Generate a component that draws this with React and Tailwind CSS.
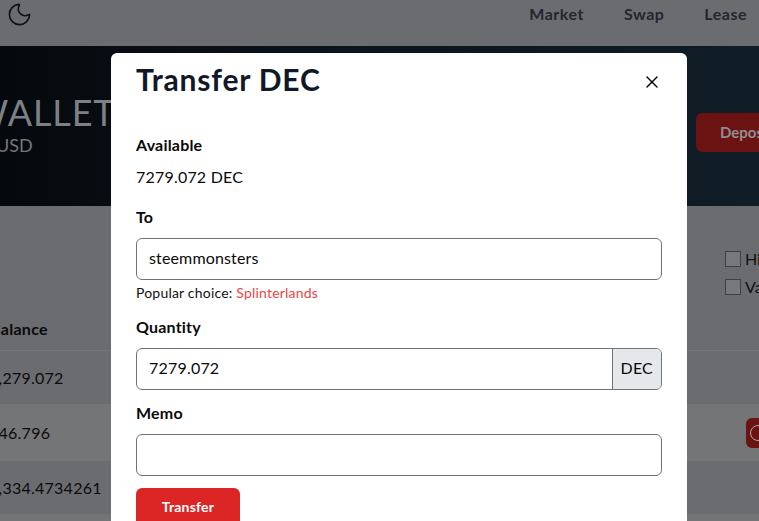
import React from "react";
import { Moon, X } from "lucide-react";

const font = { fontFamily: '"Lato", "Noto Sans", sans-serif' };

function Row({ value, shade, height, action }) {
  return (
    <div className={`flex items-center justify-between border-b border-[#74757a] -ml-[11px] ${height} ${shade}`}>
      <span className="text-[16px] tracking-[0.25px] text-[#0b0b0c]">{value}</span>
      {action && (
        <span className="w-[30px] h-[30px] -mr-[17px] rounded-md bg-[#6b1212] flex items-center px-[4px]">
          <span className="w-[16px] h-[16px] rounded-full border border-[#a9a9a9] shrink-0" />
        </span>
      )}
    </div>
  );
}

function Field({ label, children, className = "" }) {
  return (
    <div className={className}>
      <div className="text-[16px] leading-6 font-bold tracking-[0.2px] text-[#0a0a0a] mb-[9px]">{label}</div>
      {children}
    </div>
  );
}

export default function App() {
  return (
    <div style={font} className="relative w-[759px] h-[521px] overflow-hidden bg-[#6b6c70]">
      <header className="h-[46px] flex items-start justify-between bg-[#6b6c70] pl-[6px] pr-[12px] pt-[1px]">
        <Moon size={27} strokeWidth={1.4} className="text-[#0e1014]" />
        <nav className="flex gap-[40px] text-[16px] leading-6 font-bold tracking-[0.5px] text-[#23262e] pt-[1px]">
          <span>Market</span>
          <span>Swap</span>
          <span>Lease</span>
        </nav>
      </header>
      <section className="h-[160px] flex items-center justify-between bg-[linear-gradient(90deg,#05090d_0%,#0a141b_45%,#101d26_100%)]">
        <div className="-ml-[29px] -mt-[2px]">
          <div className="text-[36px] leading-10 font-normal tracking-[0.9px] text-[#7d8185]">WALLET</div>
          <div className="text-[18px] leading-7 text-[#73777b] ml-[25px] mt-[-1px]">USD</div>
        </div>
        <button className="w-[100px] h-[39px] -mr-[37px] mb-[-12px] rounded-md bg-[#6b1212] text-[#8f8f8f] text-[15px] font-bold text-left pl-[24px]">Deposit</button>
      </section>
      <section className="h-[144px] flex flex-col justify-between bg-[#6b6c70]">
        <div className="flex flex-col gap-[12px] self-end pt-[45px] w-[34px]">
          <label className="flex items-center gap-1 text-[16px] leading-4 text-[#111]"><span className="w-4 h-4 shrink-0 border border-[#3e4047] bg-[#77787b]" />Hide</label>
          <label className="flex items-center gap-1 text-[16px] leading-4 text-[#111]"><span className="w-4 h-4 shrink-0 border border-[#3e4047] bg-[#77787b]" />Value</label>
        </div>
        <div className="h-[33px] -ml-[10px] text-[16px] leading-6 font-bold tracking-[0.3px] text-[#0b0b0c]">Balance</div>
      </section>
      <div>
        <Row value="7,279.072" height="h-[55px]" shade="bg-[#6b6c70] border-t" />
        <Row value="146.796" height="h-[56px]" shade="bg-[#747577]" action />
        <Row value="1,334.4734261" height="h-[54px]" shade="bg-[#6b6c70]" />
        <Row value="" height="h-[55px]" shade="bg-[#747577]" />
      </div>

      <div className="absolute left-[111px] top-[53px] w-[576px] h-[500px] rounded-md bg-white px-[25px] text-[#0a0a0a]">
        <div className="flex items-center justify-between h-[54px]">
          <h1 className="text-[30px] font-bold leading-9 tracking-[0.8px] -mt-[2px] text-[#111827]">Transfer DEC</h1>
          <X size={20} strokeWidth={1.6} className="text-black mt-[4px]" />
        </div>
        <Field label="Available" className="mt-[26px]">
          <div className="text-[16px] leading-6 tracking-[0.2px] -mt-[1px]">7279.072 DEC</div>
        </Field>
        <Field label="To" className="mt-[16px]">
          <div className="h-[42px] rounded-md border border-[#6b7280] flex items-center px-3 pb-[2px] text-[16px] tracking-[0.15px]">steemmonsters</div>
          <div className="text-[14px] leading-5 tracking-[0.2px] mt-[3px] text-[#111]">Popular choice: <span className="text-[#ef4444]">Splinterlands</span></div>
        </Field>
        <Field label="Quantity" className="mt-[12px]">
          <div className="h-[42px] rounded-md border border-[#6b7280] flex items-center text-[16px] tracking-[0.2px] overflow-hidden">
            <span className="flex-1 px-3 pb-[2px]">7279.072</span>
            <span className="h-full flex items-center px-2 pb-[2px] border-l border-[#6b7280] bg-[#e5e7eb]">DEC</span>
          </div>
        </Field>
        <Field label="Memo" className="mt-[11px]">
          <div className="h-[42px] rounded-md border border-[#6b7280]" />
        </Field>
        <button className="block mt-[12px] w-[104px] h-[42px] rounded-md bg-[#dc2626] text-white text-[14px] font-bold tracking-[0.2px] pb-[5px]">Transfer</button>
      </div>
    </div>
  );
}
